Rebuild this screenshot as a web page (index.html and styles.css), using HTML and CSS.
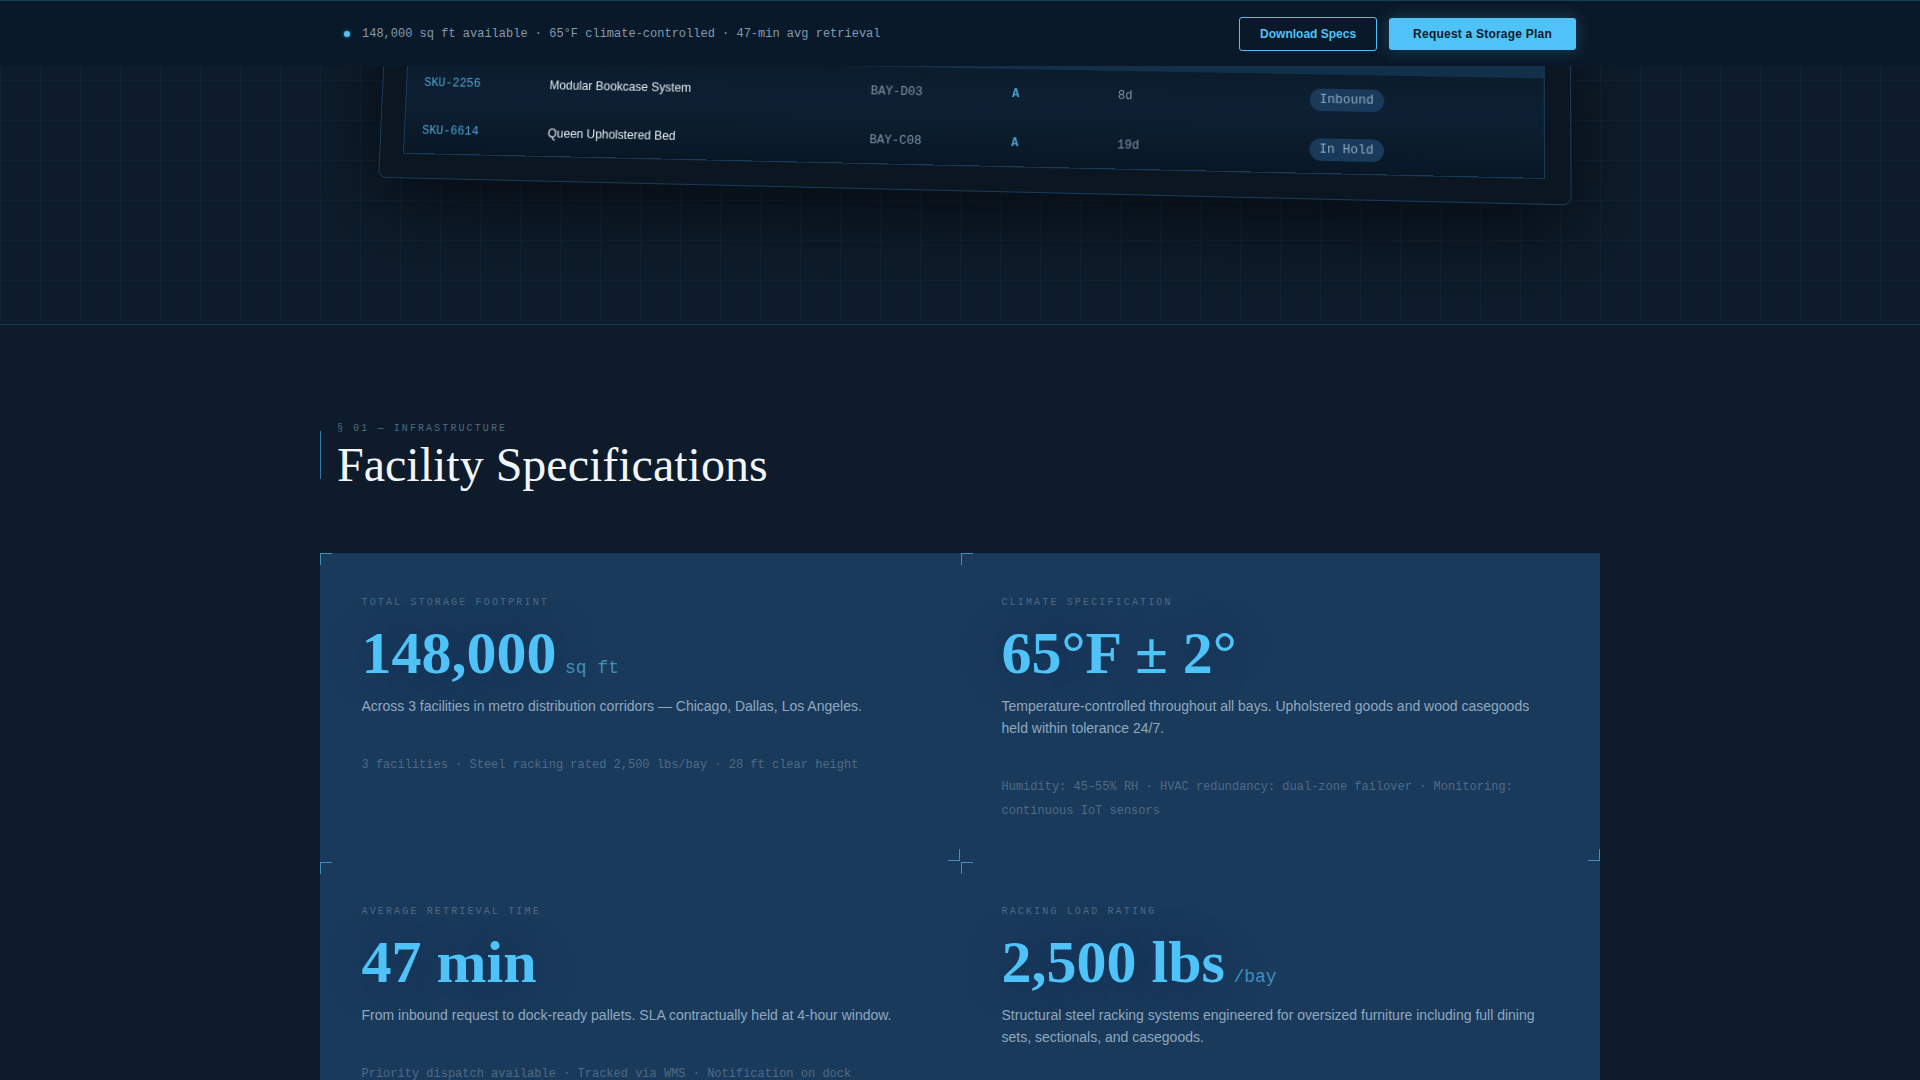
FILE: index.html
```html
<!DOCTYPE html>
<html lang="en">
<head>
<meta charset="utf-8">
<title>Facility Specifications</title>
<link rel="stylesheet" href="styles.css">
</head>
<body>
<header class="topbar">
  <div class="topbar-inner">
    <div class="status"><span class="status-dot"></span><span>148,000 sq ft available · 65°F climate-controlled · 47-min avg retrieval</span></div>
    <div class="actions">
      <a class="btn btn-ghost">Download Specs</a>
      <a class="btn btn-solid">Request a Storage Plan</a>
    </div>
  </div>
</header>
<section class="hero">
  <div class="panel">
    <div class="ledger">
      <div class="ledger-head"></div>
      <div class="ledger-row">
        <span class="sku">SKU-2256</span><span class="item">Modular Bookcase System</span><span class="bay">BAY-D03</span><span class="grade">A</span><span class="days">8d</span><span><span class="pill">Inbound</span></span>
      </div>
      <div class="ledger-row">
        <span class="sku">SKU-6614</span><span class="item">Queen Upholstered Bed</span><span class="bay">BAY-C08</span><span class="grade">A</span><span class="days">19d</span><span><span class="pill">In Hold</span></span>
      </div>
    </div>
  </div>
</section>
<main class="specs">
  <div class="section-head">
    <div class="eyebrow">§ 01 — INFRASTRUCTURE</div>
    <h2 class="title">Facility Specifications</h2>
  </div>
  <div class="grid">
    <article class="card">
      <i class="mark mark-tl"></i>
      <div class="label">TOTAL STORAGE FOOTPRINT</div>
      <div class="value">148,000<span class="unit">sq ft</span></div>
      <p class="desc">Across 3 facilities in metro distribution corridors — Chicago, Dallas, Los Angeles.</p>
      <p class="note">3 facilities · Steel racking rated 2,500 lbs/bay · 28 ft clear height</p>
      <i class="mark mark-br"></i>
    </article>
    <article class="card">
      <i class="mark mark-tl"></i>
      <div class="label">CLIMATE SPECIFICATION</div>
      <div class="value">65°F ± 2°</div>
      <p class="desc">Temperature-controlled throughout all bays. Upholstered goods and wood casegoods held within tolerance 24/7.</p>
      <p class="note">Humidity: 45–55% RH · HVAC redundancy: dual-zone failover · Monitoring: continuous IoT sensors</p>
      <i class="mark mark-br"></i>
    </article>
    <article class="card">
      <i class="mark mark-tl"></i>
      <div class="label">AVERAGE RETRIEVAL TIME</div>
      <div class="value">47 min</div>
      <p class="desc">From inbound request to dock-ready pallets. SLA contractually held at 4-hour window.</p>
      <p class="note">Priority dispatch available · Tracked via WMS · Notification on dock</p>
    </article>
    <article class="card">
      <i class="mark mark-tl"></i>
      <div class="label">RACKING LOAD RATING</div>
      <div class="value">2,500 lbs<span class="unit">/bay</span></div>
      <p class="desc">Structural steel racking systems engineered for oversized furniture including full dining sets, sectionals, and casegoods.</p>
    </article>
  </div>
</main>
</body>
</html>
```
FILE: styles.css
```css
* { box-sizing: border-box; }
html, body { margin: 0; height: 1080px; overflow: hidden; }
body { background: #0d1b2a; color: #fff; font-family: "Liberation Sans", Arial, sans-serif; position: relative; }

.topbar { position: absolute; top: 0; left: 0; right: 0; z-index: 5; height: 66px; background: #0a1929; border-top: 1px solid #1a3a5c; }
.topbar-inner { width: 1280px; margin: 0 auto; padding: 0 24px; height: 65px; display: flex; align-items: center; justify-content: space-between; }
.status { display: flex; align-items: center; gap: 12px; font: 12px "Liberation Mono", monospace; color: #8299ae; }
.status-dot { width: 6px; height: 6px; border-radius: 50%; background: #4fc3f7; box-shadow: 0 0 3px rgba(79,195,247,.7); }
.actions { display: flex; align-items: center; gap: 12px; }
.btn { font-size: 12px; font-weight: 700; border-radius: 3px; display: block; }
.btn-ghost { color: #4fc3f7; border: 1px solid #4fc3f7; padding: 9px 20px; line-height: 14px; height: 34px; }
.btn-solid { color: #0d1b2a; background: #4fc3f7; padding: 9px 24px; line-height: 14px; height: 32px; letter-spacing: .22px; box-shadow: 0 0 16px rgba(79,195,247,.25); }

.hero { height: 325px; border-bottom: 1px solid #1a3a5c; overflow: hidden; display: flex; flex-direction: column; align-items: center; justify-content: flex-end;
  background-color: #0d1b2a;
  background-image: linear-gradient(rgba(26,58,92,.2) 1px, transparent 1px), linear-gradient(90deg, rgba(26,58,92,.2) 1px, transparent 1px);
  background-size: 40px 40px; }
.panel { width: 1190px; flex: none; margin: 0 0 133.5px 2px; padding: 24px; border: 1px solid #1a3a5c; border-radius: 8px; background: #0b1620; box-shadow: 0 24px 80px rgba(0,0,0,.6);
  transform: perspective(1200px) rotateX(3deg) rotateY(-3deg) rotateZ(1.25deg); }
.ledger { border: 1px solid #1a3a5c; background: linear-gradient(#091725, #0d2033 55%, #091725); }
.ledger-head { height: 36px; background: #12304a; }
.ledger-row { height: 48.5px; display: grid; grid-template-columns: 131px 329px 142px 105px 187.5px 1fr; align-items: center; padding: 2px 0 0 18px; }
.sku { font: 12.3px "Liberation Mono", monospace; color: #4fa3d1; }
.item { font-size: 12.3px; color: #e4ecf3; }
.bay { font: 12.5px "Liberation Mono", monospace; color: #7e93a8; }
.days { font: 12px "Liberation Mono", monospace; color: #7e93a8; }
.grade { font: 700 12px "Liberation Mono", monospace; color: #4fa3d1; }
.pill { display: inline-block; padding: 4px 10px; border-radius: 12px; background: #1a3a5c; color: #8fa8bf; font: 12.5px "Liberation Mono", monospace; }

.specs { width: 1280px; margin: 0 auto; padding-top: 93px; }
.section-head { position: relative; padding-left: 17px; margin-bottom: 61px; }
.section-head::before { content: ""; position: absolute; left: 0; top: 13px; width: 1px; height: 48px; background: #2f7ea8; }
.eyebrow { font: 10px/22px "Liberation Mono", monospace; letter-spacing: 2.1px; color: #4e6a85; }
.title { margin: -3px 0 0; font: 400 48px/55px "Liberation Serif", serif; color: #f2f6fa; }
.grid { display: grid; grid-template-columns: 1fr 1fr; gap: 1px; background: #1a3a5c; }
.card { position: relative; background: #1a3a5c; padding: 42px 42px 40px 41.5px; height: 308px; }
.card:nth-child(even) { padding-left: 41px; }
.label { font: 10px/16px "Liberation Mono", monospace; letter-spacing: 2.15px; color: #4e6a85; }
.value { margin-top: 8px; font: 700 60px/68px "Liberation Serif", serif; color: #4fc3f7; text-shadow: 0 0 40px rgba(10,40,80,.45); }
.unit { margin-left: 8.5px; font: 400 18px "Liberation Mono", monospace; color: #3f8fbd; text-shadow: none; }
.desc { margin: 8px 0 0; font-size: 14px; line-height: 22px; color: #8fa8bf; }
.note { margin: 35.5px 0 0; font: 12px/24px "Liberation Mono", monospace; color: #4e6a85; }
.mark { position: absolute; display: block; width: 12px; height: 12px; }
.mark-tl { left: 0; top: 0; border-left: 1px solid #3f8fbd; border-top: 1px solid #3f8fbd; }
.mark-br { right: 0; bottom: 0; border-right: 1px solid #3f8fbd; border-bottom: 1px solid #3f8fbd; }
```
